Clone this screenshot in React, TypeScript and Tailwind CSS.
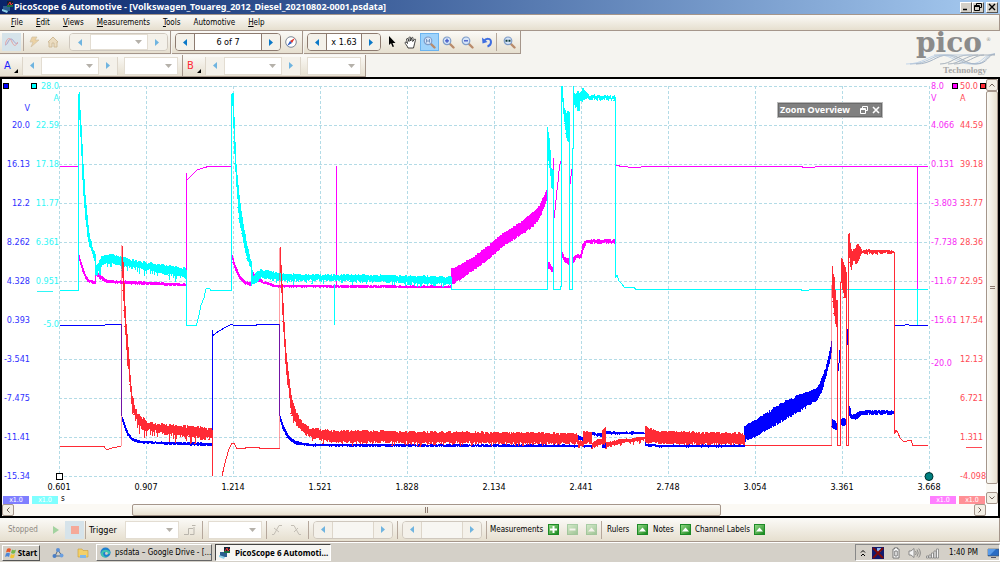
import type { ReactNode } from "react";
import clsx from "clsx";

type Point = [number, number];
type Envelope = [number, number, number]; // x, top, bottom

const menuItems = ["File", "Edit", "Views", "Measurements", "Tools", "Automotive", "Help"];
const times = ["0.601", "0.907", "1.214", "1.521", "1.828", "2.134", "2.441", "2.748", "3.054", "3.361", "3.668"];

const axisA = ["", "20.0", "16.13", "12.2", "8.262", "4.328", "0.393", "-3.541", "-7.475", "-11.41", "-15.34"];
const axisB = ["28.0", "22.59", "17.18", "11.77", "6.361", "0.951", "", "", "", "", ""];
const axisC = ["8.0", "4.066", "0.131", "-3.803", "-7.738", "-11.67", "-15.61", "", "", "", ""];
const axisD = ["50.0", "44.59", "39.18", "33.77", "28.36", "22.95", "17.54", "12.13", "6.721", "1.311", "-4.098"];

/* ── TRACES ── */

const line = (pts: Point[]) => pts.map(([x, y], i) => `${i ? "L" : "M"}${x} ${y}`).join("");

const rand = (n: number) => {
  const v = Math.sin(n * 12.9898) * 43758.5453;
  return v - Math.floor(v);
};

// fills the space between two envelopes with a sampled, noisy zigzag
const band = (pts: Envelope[], noise = 1.5, spikes = 0) => {
  let d = "";
  const end = pts[pts.length - 1][0];
  for (let x = pts[0][0]; x <= end; x += 0.5) {
    const i = Math.max(1, pts.findIndex((p) => p[0] >= x));
    const a = pts[i - 1];
    const b = pts[i];
    const t = (x - a[0]) / (b[0] - a[0]);
    const top = a[1] + (b[1] - a[1]) * t + (rand(x) - 0.5) * noise;
    const spike = rand(x * 3.7) > 0.85 ? spikes * rand(x + 9) : 0;
    const bottom = a[2] + (b[2] - a[2]) * t + (rand(x + 0.3) - 0.5) * noise + spike;
    d += `${d ? "L" : "M"}${x} ${top.toFixed(1)}L${x} ${bottom.toFixed(1)}`;
  }
  return d;
};

const magenta = [
  line([[60, 166.5], [78.5, 166.5]]),
  band([[79, 255, 259], [82, 265, 270], [85, 274, 278], [88, 279, 282], [95, 282, 284]], 1),
  line([[95.5, 284], [95.5, 271]]),
  band([[96, 271, 275], [100, 275, 279], [105, 279, 282], [112, 281, 283], [130, 281, 284], [186, 284, 286]], 1),
  line([[186.5, 286], [186.5, 173], [187, 180], [191, 176], [197, 170], [204, 167.5], [209, 166.5], [231.5, 166.5]]),
  band([[232, 255, 259], [235, 265, 270], [240, 276, 280], [245, 281, 284], [251, 283, 286]], 1),
  band([[252, 271, 275], [256, 276, 281], [263, 281, 283], [275, 285, 287], [451, 286, 288]], 1),
  line([[336.5, 166], [336.5, 286]]),
  band([[451.5, 268, 284], [456, 268, 282], [475, 256, 269], [490, 245, 258], [500, 236, 248], [520, 223, 235], [532, 214, 227], [540, 206, 217], [547, 190, 198]], 2),
  line([[547.5, 195], [547.5, 183]]),
  band([[548, 261, 268], [550, 264, 269], [553, 268, 273]]),
  line([[553.5, 158], [553.5, 222], [555, 210], [557, 190], [558.5, 178], [559.5, 165], [561.5, 160.5], [561.5, 203]]),
  band([[562, 252, 258], [564, 257, 261], [569, 259, 265]]),
  line([[570, 184], [572.5, 165], [572.5, 160]]),
  band([[573.5, 257, 262], [577, 255, 257], [581, 255, 258], [583, 245, 250], [586, 240, 243], [615, 240, 243]], 2),
  line([[615.5, 243], [615.5, 162], [616, 165.5], [619, 165.5], [620, 166.5], [635, 167.5], [648, 166.5], [800, 166.5], [805, 167.5], [826, 166.5], [928, 166.5]]),
  line([[917.5, 166], [917.5, 290]]),
];

const cyan = [
  line([[60, 290.5], [78.5, 290.5], [78.5, 94]]),
  band([[79, 93, 110], [81, 125, 145], [83, 165, 190], [85, 195, 215], [88, 225, 240], [90, 238, 248], [92, 247, 253], [95, 253, 262]], 3),
  band([[95.5, 262, 276], [97, 268, 275], [99, 263, 270], [102, 257, 265], [107, 255, 263], [115, 256, 264], [130, 260, 267], [145, 263, 269], [160, 265, 273], [186, 269, 277]], 3, 6),
  line([[186.5, 277], [186.5, 325.5], [196.5, 325.5], [199, 315], [201, 305], [204, 298], [206, 289], [209, 288], [211, 290.5], [231.5, 290.5], [231.5, 94]]),
  band([[232, 92, 102], [233, 93, 112], [234.5, 130, 155], [236, 165, 180], [239, 195, 220], [243, 225, 240], [247, 245, 260], [251, 262, 268]], 3),
  band([[251.5, 266, 285], [253, 277, 284], [256, 273, 282], [262, 270, 277], [280, 274, 280], [300, 275, 280], [340, 275, 280], [451, 277, 284]], 2.5, 4),
  line([[334.5, 284], [334.5, 325]]),
  line([[451.5, 284], [451.5, 289.5], [547.5, 289.5], [547.5, 127]]),
  band([[548, 130, 155], [550, 150, 170], [551, 165, 183], [553, 170, 192]], 6),
  line([[553.5, 192], [553.5, 289.5], [560, 289.5], [561.5, 285], [561.5, 86]]),
  band([[562, 86, 95], [563, 100, 113], [565, 112, 125], [567, 113, 140], [569, 113, 142]], 5),
  line([[569.5, 142], [569.5, 289.5], [572.5, 289.5], [572.5, 148], [573.5, 148], [573.5, 86]]),
  band([[574, 93, 102], [576, 95, 108], [579, 92, 110], [580, 95, 102], [583, 90, 100], [585, 92, 98], [590, 96, 99], [615, 97, 99]], 4),
  line([[615.5, 98], [615.5, 278], [617, 275], [619, 281], [622, 284], [624, 287], [634, 287.5], [636, 289.5], [800, 289.5], [803, 290.5], [816, 289.5], [928, 289.5]]),
  line([[917.5, 290], [917.5, 325]]),
];

const blue = [
  line([[60, 325.5], [104, 325.5], [106, 324.5], [121.5, 324.5], [121.5, 416]]),
  band([[122, 416, 420], [125, 425, 430], [128, 433, 436], [132, 438, 441], [140, 441, 443], [160, 442, 444], [212, 443, 446]], 1),
  line([[212.5, 446], [212.5, 330], [213, 335.5], [219, 331], [226, 327], [231, 324.5], [235, 325.5], [255, 325.5], [258, 324.5], [279.5, 324.5], [279.5, 416]]),
  band([[280, 416, 420], [283, 425, 430], [288, 435, 439], [295, 441, 444], [310, 444, 446], [577, 445, 447]], 1),
  band([[577.5, 435, 439], [583, 438, 441]]),
  band([[583.5, 445, 447], [591, 445, 447]]),
  band([[592, 432, 434], [597, 434, 436], [602, 433, 436]]),
  band([[602.5, 444, 448], [605.5, 444, 448]]),
  band([[606, 431, 434], [615, 432, 434], [645, 433, 434]], 1),
  line([[645.5, 433], [645.5, 446]]),
  band([[646, 444, 446], [660, 445, 447], [744, 445, 447]], 1),
  band([[744.5, 427, 441], [750, 423, 438], [756, 421, 436], [760, 418, 433], [780, 405, 422], [800, 395, 410], [817, 389, 400], [822, 380, 390], [827, 365, 372], [831, 346, 354]], 3),
  line([[831.5, 348], [831.5, 341]]),
  band([[832, 420, 427], [837, 424, 430]], 3),
  line([[837.5, 315], [837.5, 372], [838.5, 370], [840.5, 343], [840.5, 420]]),
  band([[841, 419, 425], [846, 419, 425]]),
  line([[846.5, 425], [846.5, 313], [847.5, 345], [848.5, 319], [848.5, 437]]),
  band([[849.5, 405, 415], [851, 415, 419], [855, 415, 419], [860, 411, 416], [865, 411, 414], [894, 411, 414]], 2),
  line([[894.5, 412], [894.5, 318], [895, 325.5], [903, 325.5], [907, 324.5], [911, 325.5], [928, 325.5]]),
];

const red = [
  line([[60, 446.5], [104, 446.5], [106, 449], [109, 449], [113, 447.5], [121.5, 446.5]]),
  band([[122, 244, 262], [123, 264, 290], [124.5, 295, 318], [126, 325, 345], [128, 345, 365], [130, 375, 385], [132, 395, 412], [134, 405, 414], [138, 415, 424], [142, 418, 428], [148, 423, 430], [160, 425, 433], [212, 429, 439]], 4, 8),
  line([[212.5, 438], [212.5, 476]]),
  line([[222, 476], [224, 467], [226, 459], [229, 449], [232, 443], [234, 443.5], [237, 448.5], [244, 448.5], [247, 447.5], [258, 447.5], [261, 448.5], [279.5, 448.5]]),
  band([[280, 247, 262], [282, 285, 305], [284, 322, 340], [286, 353, 372], [288, 372, 385], [291, 395, 412], [295, 410, 422], [300, 420, 428], [310, 429, 437], [330, 431, 441], [400, 432, 442], [577, 434, 443]], 3, 4),
  band([[578, 441, 447], [583, 442, 446]], 3),
  band([[583.5, 432, 443], [591, 432, 443]], 3),
  band([[592, 443, 448], [597, 440, 446], [602, 439, 443]], 2),
  band([[602.5, 430, 444], [605.5, 429, 444]], 4),
  band([[606, 443, 447], [620, 440, 443], [645, 437, 440]], 2, 4),
  band([[645.5, 426, 442], [650, 429, 442], [660, 432, 443], [744, 434, 444]], 3),
  line([[744.5, 445.5], [831.5, 445.5]]),
  band([[832, 268, 290], [834, 280, 312], [836, 305, 325], [837, 303, 331]], 6),
  line([[837.5, 331], [837.5, 445.5], [840.5, 445.5], [840.5, 282]]),
  band([[841, 260, 282], [842, 260, 285], [844, 267, 295], [846, 270, 300]], 6),
  line([[846.5, 300], [846.5, 445.5], [848.5, 445.5], [848.5, 234]]),
  band([[849, 234, 252], [850, 243, 262], [851, 250, 270], [853, 252, 260], [856, 248, 264], [858, 244, 260], [860, 247, 257], [862, 251, 253], [894, 251, 253]], 3),
  line([[894.5, 252], [894.5, 434], [896, 430], [898, 433], [900, 438], [903, 441], [906, 442], [908, 440], [911, 440], [913, 445.5], [928, 445.5]]),
];

// sparse edges look washed out where the trace only passes once
const softEdges = line([[121.5, 245], [121.5, 446]]) + line([[279.5, 248], [279.5, 448]]) + line([[831.5, 285], [831.5, 445]]);

const ScopePlot = () => (
  <svg viewBox="59 86 870 391" preserveAspectRatio="none" className="block w-full flex-1 overflow-visible" fill="none" shapeRendering="crispEdges">
    <g stroke="#b3dbe6" strokeDasharray="3 2">
      {times.map((t, i) => (
        <g key={t}>
          <path d={`M${59.5 + i * 86.95} 86V477`} />
          <path d={`M59 ${86.5 + i * 39}H929`} />
        </g>
      ))}
    </g>
    <path stroke="#ff00ff" d={magenta.join("")} />
    <path stroke="#00ffff" d={cyan.join("")} />
    <path stroke="#0000ff" d={blue.join("")} />
    <path stroke="#ff2a35" opacity="0.45" d={softEdges} />
    <path stroke="#ff2a35" d={red.join("")} />
    <rect x="56.5" y="473.5" width="6" height="6" fill="#fff" stroke="#000" />
    <circle cx="929" cy="476.5" r="4" fill="#008080" stroke="#00302f" shapeRendering="auto" />
  </svg>
);

/* ── AXES ── */

type AxisProps = {
  ticks: string[];
  unit: string;
  unitClass?: string;
  className: string;
  swatch: string;
  markAt?: number;
  minimum?: string;
  right?: boolean;
};

const Axis = ({ ticks, unit, unitClass, className, swatch, markAt, minimum, right }: AxisProps) => (
  <div className={clsx("flex shrink-0 flex-col pb-px text-[9px] leading-3", right ? "pl-0.5 text-left" : "text-right", className)}>
    {ticks.map((t, i) => (
      <div key={i} className={i === 10 ? "h-0" : "min-h-0 flex-1 basis-0"}>
        <div className="-mt-1.5 flex flex-col">
          <div className={clsx("flex h-3 items-center", right && "flex-row-reverse", i === 0 ? "justify-between" : "justify-end")}>
            {i === 0 && <span className={clsx("size-1.5 shrink-0 border border-black", swatch)} />}
            <span className="whitespace-nowrap">{t}</span>
          </div>
          {i === 0 && <span className={unitClass}>{unit}</span>}
          {i === markAt && <span className={clsx("mt-1 h-px w-4 bg-current", right ? "ml-1.5" : "mr-1.5 self-end")} />}
          {minimum && i === (right ? 7 : 6) && <span className="-mt-2">{minimum}</span>}
        </div>
      </div>
    ))}
  </div>
);

/* ── CONTROLS ── */

const Arrow = ({ dir, on }: { dir: "left" | "right"; on?: boolean }) => (
  <svg viewBox="0 0 4 7" className={clsx("h-[7px] w-1", on ? "text-[#0a78c8]" : "text-[#6fb4e0]")} fill="currentColor">
    <path d={dir === "left" ? "M4 0V7L0 3.5Z" : "M0 0V7L4 3.5Z"} />
  </svg>
);

const Step = ({ dir, on, label }: { dir: "left" | "right"; on?: boolean; label: string }) => (
  <button aria-label={label} className="flex h-full flex-1 items-center justify-center bg-[#f4f1ea]">
    <Arrow dir={dir} on={on} />
  </button>
);

const Drop = ({ label, className }: { label: string; className: string }) => (
  <div className={clsx("grid shrink-0 items-center border border-[#e3ddd2] bg-white", className)}>
    <select aria-label={label} className="col-start-1 row-start-1 h-full w-full appearance-none bg-transparent" />
    <svg viewBox="0 0 7 4" className="pointer-events-none col-start-1 row-start-1 mr-[5px] h-1 w-[7px] justify-self-end" fill="#b5b1aa">
      <path d="M0 0H7L3.5 4Z" />
    </svg>
  </div>
);

const Spinner = ({ label, on, className, children }: { label: string; on?: boolean; className: string; children: ReactNode }) => (
  <div className={clsx("flex h-[18px] shrink-0 items-center overflow-hidden rounded-sm border", on ? "border-[#8d7b70]" : "border-[#cfc8be]", className)}>
    <Step dir="left" on={on} label={`Previous ${label}`} />
    {children}
    <Step dir="right" on={on} label={`Next ${label}`} />
  </div>
);

const Sep = () => <span className="h-[18px] w-px shrink-0 bg-[#b5a79b]" />;

const bar = "flex items-center border-r border-b border-[#a5968b] bg-linear-to-b from-[#fbfaf7] to-[#e6dfcf]";

const Tool = ({ label, active, className, children }: { label: string; active?: boolean; className?: string; children: ReactNode }) => (
  <button aria-label={label} className={clsx("flex h-[18px] w-[19px] shrink-0 items-center justify-center", active && "border border-[#6cb4ef] bg-[#9fd3fb]", className)}>
    {children}
  </button>
);

const Lens = ({ children }: { children?: ReactNode }) => (
  <svg viewBox="0 0 13 13" className="size-[13px]">
    <path d="M7.5 7.5L11.5 11.5" stroke="#b98b6b" strokeWidth="2.4" strokeLinecap="round" />
    <circle cx="5" cy="4.8" r="3.8" fill="#d5e4f8" stroke="#7f9dc9" strokeWidth="1.2" />
    {children}
  </svg>
);

const ChannelControls = ({ name, color }: { name: string; color: string }) => (
  <div className={clsx(bar, "h-[22px] w-[183px] pl-1")}>
    <button className={clsx("flex w-[18px] items-end gap-[3px] text-[11px] leading-4", color)}>
      {name}
      <svg viewBox="0 0 4 4" className="mb-px size-1">
        <path d="M4 0V4H0Z" fill="#000" />
      </svg>
    </button>
    <div className="flex h-[18px] w-[96px] border-x border-[#ddd6ca]">
      <Step dir="left" label={`Channel ${name} range down`} />
      <Drop label={`Channel ${name} range`} className="h-full w-[58px]" />
      <Step dir="right" label={`Channel ${name} range up`} />
    </div>
    <Drop label={`Channel ${name} coupling`} className="ml-1.5 h-[18px] w-[54px]" />
  </div>
);

const PicoLogo = () => (
  <svg viewBox="0 0 92 42" className="h-[42px] w-[92px] overflow-visible" fill="none">
    <path d="M2 31C20 31 24 22 36 22S52 31 66 31S78 21 91 21" stroke="#c4d6ea" />
    <path d="M6 31C24 31 28 22 40 22S56 31 70 31S80 21 91 21" stroke="#b2c4d8" />
    <path d="M12 31C28 31 32 22 44 22S60 31 72 31S84 21 91 21" stroke="#a3b2c4" />
    <path d="M36 31C48 31 52 22 64 22H91M44 31C56 31 62 22 74 22M50 31C64 31 70 22 80 22" stroke="#a9b3be" />
    <path d="M30 22H68" stroke="#b9c9da" />
    <text x="12" y="19" fontSize="28" fontWeight="bold" fontFamily="DejaVu Serif, serif" fill="#8b8b8b">pico</text>
    <text x="82" y="8" fontSize="5" fontFamily="DejaVu Sans, sans-serif" fill="#999">®</text>
    <text x="39" y="40" fontSize="9" fontWeight="bold" fontFamily="Liberation Serif, serif" fill="#a5a5a5">Technology</text>
  </svg>
);

const WindowButton = ({ label, children }: { label: string; children: ReactNode }) => (
  <button aria-label={label} className="flex h-[11px] w-3 items-center justify-center border border-t-white border-r-[#555] border-b-[#555] border-l-white bg-[#d4d0c8]">
    <svg viewBox="0 0 8 8" className="size-2" fill="none" stroke="#000">{children}</svg>
  </button>
);

const restorePath = "M2.5 2.5V.5H7.5V4.5H5.5M.5 2.5H5.5V7.5H.5ZM.5 3.5H5.5";

const GreenButton = ({ label, path, faded }: { label: string; path: string; faded?: boolean }) => (
  <button aria-label={label} className={clsx("size-[11px] shrink-0 border border-[#1d8a26] bg-linear-to-br from-[#8fd884] to-[#0a8a1a]", faded && "opacity-35")}>
    <svg viewBox="0 0 9 9" className="size-[9px]" fill="#fff">
      <path d={path} />
    </svg>
  </button>
);

const upPath = "M1 6.5H8L4.5 2.5Z";

const ScrollArrow = ({ label, path }: { label: string; path: string }) => (
  <button aria-label={label} className="flex size-3 shrink-0 items-center justify-center rounded-xs border border-[#a5968b] bg-[#f3efe5]">
    <svg viewBox="0 0 6 6" className="size-1.5" fill="none" stroke="#6f6259">
      <path d={path} />
    </svg>
  </button>
);

const ProbeTag = ({ className }: { className: string }) => (
  <span className={clsx("h-2 w-[26px] text-center text-[7px] leading-2 text-white", className)}>x1.0</span>
);

const PicoIcon = () => (
  <svg viewBox="0 0 12 12" className="size-3 shrink-0">
    <path d="M1 5H8V10H1Z" fill="#2b5f8f" />
    <path d="M5 0H11V6H5Z" fill="#123" />
    <path d="M6 4L8 1L9 4L11 2" stroke="#e33" fill="none" />
    <path d="M5 5H11" stroke="#2bbf4b" />
    <path d="M0 8L6 10L5 12L0 10Z" fill="#8fd0e8" />
  </svg>
);

const task = "flex h-[17px] w-[116px] shrink-0 items-center gap-1 border px-[3px]";

export default function App() {
  return (
    <div className="flex min-h-screen flex-col bg-[#f5f4f0] font-['DejaVu_Sans_Condensed','DejaVu_Sans',sans-serif] text-[8px] leading-3 text-black">
      {/* ── TITLE BAR ── */}
      <header className="flex h-[14px] items-center bg-linear-to-r from-[#0a246a] to-[#a6caf0] px-0.5">
        <PicoIcon />
        <h1 className="min-w-0 flex-1 truncate font-['Noto_Sans',sans-serif] text-[9px] leading-3 font-bold text-white">
          PicoScope 6 Automotive - [Volkswagen_Touareg_2012_Diesel_20210802-0001.psdata]
        </h1>
        <WindowButton label="Minimize"><path d="M1 6.5H5" strokeWidth="1.5" /></WindowButton>
        <WindowButton label="Restore"><path d={restorePath} /></WindowButton>
        <span className="w-0.5" />
        <WindowButton label="Close"><path d="M1 1L7 7M7 1L1 7" strokeWidth="1.4" /></WindowButton>
      </header>

      {/* ── MENU ── */}
      <nav className={clsx(bar, "h-[17px] gap-[13px] border-t pl-[11px]")}>
        {menuItems.map((m) => (
          <button key={m}>
            {m === "Automotive" ? m : <><u>{m[0]}</u>{m.slice(1)}</>}
          </button>
        ))}
      </nav>

      {/* ── TOOLBARS ── */}
      <div className="flex h-[46px] justify-between">
        <div>
          <div className="flex h-[23px] gap-px">
            <div className={clsx(bar, "w-[171px] pl-0.5")}>
              <Tool label="Scope mode" className="bg-[#d6e3ea]">
                <svg viewBox="0 0 13 10" className="h-2.5 w-[13px]" fill="none">
                  <path d="M0 8C3 8 3 2 6 2S9 8 13 6" stroke="#a9a2cc" />
                  <path d="M0 8C2 0 5 0 7 5S11 9 13 5" stroke="#e3a3a3" />
                </svg>
              </Tool>
              <span className="w-0.5" />
              <Sep />
              <Tool label="Auto setup">
                <svg viewBox="0 0 12 12" className="size-3"><path d="M4 1H9L7 4H11L3 11L5 6H2Z" fill="#ecd2a4" stroke="#d0c0a4" strokeWidth=".7" /></svg>
              </Tool>
              <Tool label="Home">
                <svg viewBox="0 0 12 12" className="size-3"><path d="M1 6L6 1L11 6H10V11H7V7H5V11H2V6Z" fill="#ebdcc1" stroke="#cdb893" strokeWidth=".9" /></svg>
              </Tool>
              <Spinner label="timebase" className="ml-[7px] w-[99px]">
                <Drop label="Timebase" className="h-full w-[58px]" />
              </Spinner>
            </div>
            <div className={clsx(bar, "w-[131px] pl-[3px]")}>
              <Spinner label="waveform" on className="w-[106px]">
                <input aria-label="Waveform" defaultValue="6 of 7" className="h-full w-[68px] border-x border-[#8d7b70] bg-white text-center text-[9px]" />
              </Spinner>
              <Tool label="Buffer overview">
                <svg viewBox="0 0 12 12" className="size-3">
                  <circle cx="6" cy="6" r="5.3" fill="#fff" stroke="#7d8796" />
                  <path d="M10 2L7 7L5 5Z" fill="#e0352b" />
                  <path d="M2 10L7 7L5 5Z" fill="#2f5cc0" />
                </svg>
              </Tool>
            </div>
            <div className={clsx(bar, "w-[217px] pl-[3px]")}>
              <Spinner label="zoom" on className="w-[74px]">
                <input aria-label="Zoom" defaultValue="x 1.63" className="h-full w-9 border-x border-[#8d7b70] bg-white text-center text-[9px]" />
              </Spinner>
              <Tool label="Select" className="ml-px">
                <svg viewBox="0 0 8 12" className="h-3 w-2"><path d="M1 0V9L3 7.3L4.6 11L6 10.4L4.5 7H7.5Z" /></svg>
              </Tool>
              <Tool label="Pan">
                <svg viewBox="0 0 13 13" className="size-[13px]">
                  <path d="M4 12C3 9 1 8 1 6.500C2 5.500 3 6.500 3.500 7.500L2.500 3C3 2 4 2.500 4.300 3.500L5 5.500V1.500C5.500.5 6.500.7 6.700 1.700V5L7.700 1.800C8.300 1 9.200 1.400 9 2.500L8.700 5.500L10.500 3.200C11.500 2.800 11.800 3.500 11.400 4.300C10.500 6.500 10.500 9 9.500 12Z" fill="#fff" stroke="#111" strokeWidth=".8" />
                </svg>
              </Tool>
              <Tool label="Zoom window" active><Lens><path d="M3.500 3V6.500M5 4V6M6.500 3V6.500" stroke="#5d7fb0" strokeWidth=".8" /></Lens></Tool>
              <Tool label="Zoom in"><Lens><path d="M5 2.800V6.800M3 4.800H7" stroke="#3f55c4" strokeWidth="1.300" /></Lens></Tool>
              <Tool label="Zoom out"><Lens><path d="M3 4.800H7" stroke="#3f55c4" strokeWidth="1.300" /></Lens></Tool>
              <Tool label="Undo zoom">
                <svg viewBox="0 0 12 12" className="size-3">
                  <path d="M3 5C5 2 10 2 10 6C10 8.500 8 10 6.500 10.500" fill="none" stroke="#3f6ee0" strokeWidth="2" />
                  <path d="M1 1.500L1.500 7.500L6.500 6Z" fill="#3f6ee0" />
                </svg>
              </Tool>
              <Sep />
              <span className="w-[3px]" />
              <Tool label="Zoom to full">
                <Lens><path d="M2.500 4.800H4.500M5.500 4.800H7.500" stroke="#123c3c" strokeWidth="2" /></Lens>
              </Tool>
            </div>
          </div>
          <div className="flex pt-px">
            <ChannelControls name="A" color="text-[#1a1aff]" />
            <ChannelControls name="B" color="text-[#ff2a35]" />
          </div>
        </div>
        <div className="pt-0.5 pr-1"><PicoLogo /></div>
      </div>

      {/* ── SCOPE VIEW ── */}
      <main className="relative flex min-h-[300px] flex-1 border-2 border-black bg-white">
        <div className="flex min-w-0 flex-1 flex-col">
          <div className="flex flex-1 pt-[7px]">
            <Axis ticks={axisA} unit="V" unitClass="mt-2.5" className="mb-[19px] w-[29px] pr-px pl-px text-[#3030ff]" swatch="bg-[#0000ff]" />
            <Axis ticks={axisB} unit="A" className="mb-[19px] w-7 text-[#2ff6f6]" swatch="bg-[#00ffff]" markAt={5} minimum="-5.0" />
            <div className="flex min-w-0 flex-1 flex-col">
              <ScopePlot />
              <div className="flex h-[19px] items-center justify-between text-[9px]">
                {times.map((t) => (
                  <span key={t} className="flex w-0 justify-center">{t}</span>
                ))}
              </div>
            </div>
            <Axis ticks={axisC} unit="V" className="mb-[19px] w-[29px] text-[#f62af6]" swatch="bg-[#ff00ff]" minimum="-20.0" right />
            <Axis ticks={axisD} unit="A" className="mb-[19px] w-7 text-[#ff4a55]" swatch="bg-[#ff2a35]" markAt={9} right />
          </div>
          <div className="flex h-2 gap-[3px] px-px">
            <ProbeTag className="bg-[#7f7fff]" />
            <ProbeTag className="bg-[#7fffff]" />
            <span className="flex-1 leading-[6px]">s</span>
            <ProbeTag className="bg-[#ff7fff]" />
            <ProbeTag className="bg-[#ff9095]" />
          </div>
          <div className="flex h-3 bg-[#fbf9f4]">
            <ScrollArrow label="Scroll left" path="M4.500 .5L2 3L4.500 5.500" />
            <div className="flex-1 pl-[12%]">
              <div className="flex h-3 w-[70%] items-center justify-center gap-px rounded-xs border border-[#a5968b] bg-linear-to-b from-[#fbfaf6] to-[#e8e1d0]">
                <i className="h-1.5 w-px bg-[#8d7b70]" />
                <i className="h-1.5 w-px bg-[#8d7b70]" />
              </div>
            </div>
            <ScrollArrow label="Scroll right" path="M1.500 .5L4 3L1.500 5.500" />
          </div>
        </div>
        <div className="mb-3 flex w-3 flex-col bg-[#fbf9f4]">
          <ScrollArrow label="Scroll up" path="M.5 4.500L3 2L5.500 4.500" />
          <div className="flex flex-1 flex-col items-center justify-center gap-px rounded-xs border border-[#a5968b] bg-linear-to-r from-[#fbfaf6] to-[#e8e1d0]">
            <i className="h-px w-[5px] bg-[#8d7b70]" />
            <i className="h-px w-[5px] bg-[#8d7b70]" />
          </div>
          <span className="h-2" />
          <ScrollArrow label="Scroll down" path="M.5 1.500L3 4L5.500 1.500" />
        </div>

        {/* floating panel, collapsed to its caption */}
        <section className="absolute top-[23px] right-[115px] flex h-4 w-[106px] items-center border border-[#b9b9b9] bg-[#808080] px-0.5 text-white outline outline-[#6a6a6a] -outline-offset-2">
          <h2 className="flex-1 font-['Noto_Sans',sans-serif] text-[9px] leading-3 font-bold whitespace-nowrap">Zoom Overview</h2>
          <button aria-label="Restore panel" className="mr-1">
            <svg viewBox="0 0 8 8" className="size-2" fill="none" stroke="#fff"><path d={restorePath} /></svg>
          </button>
          <button aria-label="Close panel">
            <svg viewBox="0 0 8 8" className="size-2" stroke="#fff" strokeWidth="1.600"><path d="M1 1L7 7M7 1L1 7" /></svg>
          </button>
        </section>
      </main>

      {/* ── CAPTURE BAR ── */}
      <div className={clsx(bar, "h-6")}>
        <span className="w-[46px] pl-2 text-[#8f8a83]">Stopped</span>
        <Tool label="Start capture">
          <svg viewBox="0 0 6 8" className="h-2 w-1.5"><path d="M0 0V8L6 4Z" fill="#a3d3a0" /></svg>
        </Tool>
        <Tool label="Stop capture" className="bg-[#d6e3ea]"><span className="size-2 bg-[#f5a999]" /></Tool>
        <span className="w-px" />
        <Sep />
        <label htmlFor="trigger" className="w-[39px] pl-[3px] text-[9px]">Trigger</label>
        <div className="grid h-[18px] w-[54px] shrink-0 items-center border border-[#e3ddd2] bg-white">
          <select id="trigger" className="col-start-1 row-start-1 h-full w-full appearance-none bg-transparent" />
          <svg viewBox="0 0 7 4" className="pointer-events-none col-start-1 row-start-1 mr-[5px] h-1 w-[7px] justify-self-end" fill="#b5b1aa">
            <path d="M0 0H7L3.5 4Z" />
          </svg>
        </div>
        <Tool label="Advanced triggers" className="mr-[3px] ml-px">
          <svg viewBox="0 0 12 12" className="size-3" fill="none" stroke="#b9b5ac"><path d="M0 10.500H4.500V4.500H9M6 10.500H10V3M8 1.500H11.500" /></svg>
        </Tool>
        <Sep />
        <Drop label="Trigger source" className="mr-1 ml-[5px] h-[18px] w-[54px]" />
        <Sep />
        <Tool label="Rising edge">
          <svg viewBox="0 0 12 12" className="size-3" fill="none" stroke="#c3beb5"><path d="M1 10.500H3L8 1.500H11M3 4L8 8" /></svg>
        </Tool>
        <Tool label="Falling edge" className="mr-[3px]">
          <svg viewBox="0 0 12 12" className="size-3" fill="none" stroke="#c3beb5"><path d="M1 1.500H4L9 10.500H11M4 8L8 4" /></svg>
        </Tool>
        <Sep />
        <Spinner label="threshold" className="mx-1 w-[80px]">
          <input aria-label="Threshold" className="h-full w-[42px] border-x border-[#ddd6ca] bg-[#f7f6f2]" />
        </Spinner>
        <Sep />
        <Spinner label="pre-trigger" className="mx-1 w-[80px]">
          <input aria-label="Pre-trigger" className="h-full w-[42px] border-x border-[#ddd6ca] bg-[#f7f6f2]" />
        </Spinner>
        <Sep />
        <span className="w-[61px] pl-[3px]">Measurements</span>
        <div className="flex gap-2">
          <GreenButton label="Add measurement" path="M3.500 1H5.500V3.500H8V5.500H5.500V8H3.500V5.500H1V3.500H3.500Z" />
          <GreenButton label="Delete measurement" path="M1.500 3.500H7.500V5.500H1.500Z" faded />
          <GreenButton label="Edit measurement" path={upPath} faded />
        </div>
        <span className="w-1" />
        <Sep />
        <span className="w-[35px] pl-[5px]">Rulers</span>
        <GreenButton label="Show rulers" path={upPath} />
        <span className="w-8 pl-[5px]">Notes</span>
        <GreenButton label="Show notes" path={upPath} />
        <span className="w-[63px] pl-1 whitespace-nowrap">Channel Labels</span>
        <GreenButton label="Show channel labels" path={upPath} />
      </div>

      {/* ── TASKBAR ── */}
      <footer className="flex h-5 items-center border-t border-white bg-[#d4d0c8] pl-0.5">
        <button className="flex h-4 w-[38px] items-center justify-center gap-px border border-t-white border-r-[#555] border-b-[#555] border-l-white font-['Noto_Sans',sans-serif] font-bold">
          <svg viewBox="0 0 12 12" className="size-3">
            <path d="M2 2C3 1 5 1 6 2L5 5.500C4 4.500 2.500 4.500 1 5.500Z" fill="#e8572a" />
            <path d="M7 2.500C8 3.500 10 3.500 11 2.500L10 6C9 7 7.500 7 6 6Z" fill="#77b84a" />
            <path d="M1 6.500C2 5.500 4 5.500 5 6.500L4 10C3 9 1.500 9 0 10Z" fill="#4b86d8" />
            <path d="M6 7C7 8 8.500 8 10 7L9 10.500C8 11.500 6 11.500 5 10.500Z" fill="#f3c433" />
          </svg>
          Start
        </button>
        <button aria-label="Network" className="ml-3">
          <svg viewBox="0 0 12 12" className="size-3">
            <path d="M6 3L3 9H10Z" fill="none" stroke="#567" />
            <circle cx="6" cy="3" r="2" fill="#5b8fd6" />
            <circle cx="2.500" cy="9" r="2" fill="#4b7fc6" />
            <circle cx="9.500" cy="8.500" r="2" fill="#6b9fe0" />
          </svg>
        </button>
        <button aria-label="Explorer" className="ml-[13px]">
          <svg viewBox="0 0 12 12" className="size-3">
            <path d="M1 2H5L6 3.500H11V10H1Z" fill="#f2d06a" stroke="#c99e35" strokeWidth=".6" />
            <path d="M3 8H9V11H3Z" fill="#7fb8ea" />
          </svg>
        </button>
        <button className={clsx(task, "ml-[7px] border-t-white border-r-[#666] border-b-[#666] border-l-white")}>
          <svg viewBox="0 0 12 12" className="size-[11px] shrink-0">
            <circle cx="6" cy="6" r="5.500" fill="#1d7fd0" />
            <path d="M1 7C2 2 9 2 11.500 6C11 8 8 8 7 7.500C7 5 4 4.500 3.500 7C3.500 10 6 11 9 10.500C4 13 1 10 1 7Z" fill="#3fc3b0" />
            <circle cx="7" cy="7" r="1.500" fill="#d4d0c8" />
          </svg>
          <span className="whitespace-nowrap">psdata – Google Drive - [...</span>
        </button>
        <button className={clsx(task, "ml-[3px] border-t-[#444] border-r-white border-b-white border-l-[#444] bg-[#f6f5f2] font-['Noto_Sans',sans-serif] font-bold")}>
          <PicoIcon />
          <span className="whitespace-nowrap">PicoScope 6 Automoti...</span>
        </button>
        <div className="ml-auto flex h-[17px] w-[145px] items-center border border-t-[#888] border-r-white border-b-white border-l-[#888] pl-1">
          <button aria-label="Show hidden icons">
            <svg viewBox="0 0 6 8" className="h-2 w-1.5" fill="none" stroke="#000"><path d="M1 3.500L3 1.500L5 3.500M1 7L3 5L5 7" /></svg>
          </button>
          <svg viewBox="0 0 12 12" className="ml-1.5 size-3">
            <path d="M0 0H12V12H0Z" fill="#111a6e" />
            <path d="M5 1H9V5H5Z" fill="#8fb4ee" />
            <path d="M1 1L11 11M11 1L1 11" stroke="#7c0c0c" strokeWidth="2" />
          </svg>
          <svg viewBox="0 0 8 12" className="ml-2 h-3 w-2" fill="#fff" stroke="#777"><path d="M1 2H2.500V.8H5.500V2H7V11H1Z" /><path d="M2.800 4H5.200V9H2.800Z" /></svg>
          <svg viewBox="0 0 13 12" className="ml-2 h-3 w-[13px]" fill="#f5f5f5" stroke="#777" strokeWidth=".8"><path d="M1 4H3L6 1.500V10.500L3 8H1Z" /><path d="M7.500 4Q9 6 7.500 8M9 2.500Q11.500 6 9 9.500M10.700 1.500Q14 6 10.700 10.500" fill="none" /></svg>
          <svg viewBox="0 0 13 12" className="ml-[5px] h-3 w-[13px]" fill="#f5f5f5" stroke="#777" strokeWidth=".7"><path d="M.5 9H2.500V11H.5ZM3 8H5V11H3ZM5.500 6H7.500V11H5.500ZM8 4H10V11H8ZM10.500 2H12.500V11H10.500Z" /></svg>
          <time className="ml-2.5 whitespace-nowrap">1:40 PM</time>
          <svg viewBox="0 0 12 12" className="ml-auto size-3"><path d="M1 2H12V9H1Z" fill="#2a6cc4" stroke="#456" strokeWidth=".6" /><path d="M1 2L9 2L3 8H1Z" fill="#5a9be8" /><path d="M4 10H9V11H4Z" fill="#556" /></svg>
        </div>
      </footer>
    </div>
  );
}
